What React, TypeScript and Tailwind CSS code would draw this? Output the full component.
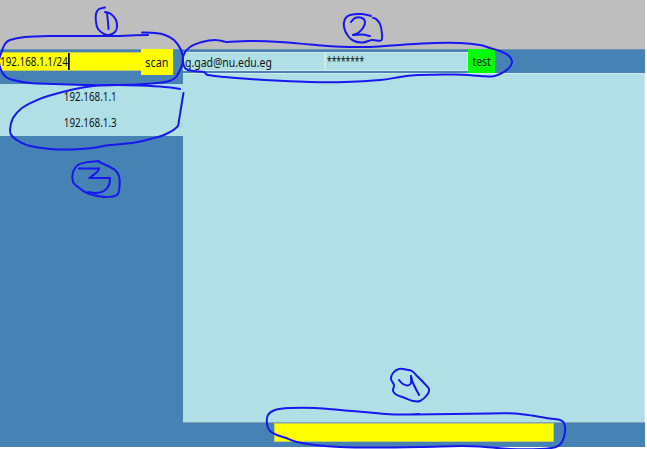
type Point = [number, number];

// Turns a list of pen positions into one smooth curve.
function smooth(points: Point[]): string {
  let d = `M${points[0][0]} ${points[0][1]}`;
  for (let i = 0; i < points.length - 1; i++) {
    const a = points[Math.max(i - 1, 0)];
    const b = points[i];
    const c = points[i + 1];
    const e = points[Math.min(i + 2, points.length - 1)];
    d += `C${b[0] + (c[0] - a[0]) / 6} ${b[1] + (c[1] - a[1]) / 6} ${c[0] - (e[0] - b[0]) / 6} ${c[1] - (e[1] - b[1]) / 6} ${c[0]} ${c[1]}`;
  }
  return d;
}

const strokes: Point[][] = [
  // 1
  [[105, 7.5], [99, 9], [96, 14], [96, 22], [98, 29], [104, 34], [109, 35], [115, 32], [117, 27], [116, 20], [111, 14], [105, 12]],
  [[107, 13], [108, 22], [108.5, 29]],
  [[148, 35], [130, 35.5], [108, 36], [80, 36], [50, 36], [25, 37], [10, 40], [5, 44], [2, 51], [-1, 60], [1, 70], [6, 77], [13, 80], [30, 83], [55, 84], [88, 85], [120, 85], [145, 84], [165, 82], [175, 78], [180, 70], [183, 60], [181, 50], [174, 40], [165, 35], [155, 33], [142, 32.5]],
  // 2
  [[371, 16], [362, 14], [350, 15], [345, 19], [344, 27], [348, 36], [354, 41], [363, 42.5], [372, 40], [381, 40.5], [382, 34], [380, 24], [376, 19], [373, 18]],
  [[351, 22], [355, 18], [362, 18], [365, 22], [363, 28], [358, 33], [353, 35], [362, 34.5], [370, 36]],
  [[226, 42], [215, 40], [202, 42], [190, 47], [184, 54], [183, 62], [186, 69], [194, 71], [204, 72], [208, 75], [225, 77], [250, 79], [275, 80.5], [310, 82], [345, 82], [380, 80], [400, 77], [418, 75], [455, 74.5], [480, 76], [492, 76.5], [500, 74], [508, 69], [512, 62], [509, 56], [500, 51], [490, 48], [480, 45], [460, 43], [435, 43], [405, 44.5], [370, 47], [335, 46.5], [310, 44.5], [280, 42], [250, 41], [226, 42]],
  // 3
  [[180, 89], [165, 87], [140, 85.5], [115, 85], [93, 86], [75, 89], [48, 96], [35, 101], [22, 108], [13, 118], [10, 130], [12, 136], [20, 142], [30, 146], [50, 149], [72, 149.5], [92, 148], [110, 145], [132, 143], [150, 139], [164, 135], [177, 127], [179, 120], [181, 108], [183.5, 93]],
  [[99, 161], [88, 162], [78, 165], [73, 172], [73, 182], [78, 187], [85, 192], [93, 195], [106, 197], [117, 195], [119.5, 187], [119, 176], [115, 170], [108, 166], [99, 162]],
  [[79, 168.5], [99, 168.5]],
  [[99, 168.5], [97, 172], [89.5, 178]],
  [[89.5, 178], [110, 178]],
  [[110, 178], [109, 185], [104, 191], [96, 193], [88, 192]],
  // 4
  [[406, 369.5], [399, 369], [393, 373], [391, 379], [394, 385], [393, 391], [397, 395], [405, 398], [413, 401], [420, 401], [427, 395], [429, 389], [424, 383], [418, 377], [412, 371], [406, 369.5]],
  [[399, 380], [403, 384], [408, 385.5], [411, 383], [411, 376]],
  [[411, 376], [413, 383], [419, 395]],
  [[419, 414], [395, 414.5], [375, 413], [345, 410.5], [315, 408], [290, 408], [275, 410], [268, 415], [267, 424], [270, 431], [277, 435], [286, 438], [297, 442], [315, 445], [340, 447], [375, 447.5], [420, 447], [460, 446], [480, 446.5], [510, 449], [540, 449], [556, 447], [562, 442], [565, 432], [564, 423], [560, 420], [550, 418.5], [535, 416], [515, 413.5], [490, 413.5], [414, 414.5]],
];

function Ink() {
  return (
    <svg className="pointer-events-none absolute left-0 top-0" width="647" height="449" viewBox="0 0 647 449" fill="none" stroke="#1717ee" strokeWidth="2" strokeLinecap="round" strokeLinejoin="round">
      {strokes.map((points, i) => <path key={i} d={smooth(points)} />)}
    </svg>
  );
}

export default function App() {
  return (
    <div className="relative h-[449px] w-[647px] overflow-hidden bg-white font-['Noto_Sans','Open_Sans',sans-serif] text-[12px] leading-[18px] text-[#101618]">
      <div className="flex h-[447px] w-[645px] flex-col bg-[#4682b4]">
        <header className="h-[49px] shrink-0 bg-[#bebebe]" />
        <div className="flex h-[398px] border-t border-[#6b93b3]">
          <aside className="w-[183px] shrink-0">
            <div className="flex h-[34px] items-start">
              <div className="mt-[2px] h-[19px] w-[141px] border-y border-[#c8cc54] bg-[#ffff00]">
                <span className="inline-block origin-left scale-x-[.82] border-r-2 border-black leading-[17px]">192.168.1.1/24</span>
              </div>
              <button className="-mt-px h-[26px] w-8 bg-[#ffff00] text-center leading-[27px]"><span className="inline-block scale-x-[.9]">scan</span></button>
            </div>
            <ul className="h-[52px] bg-[#b0e0e6] text-center">
              <li className="h-[26px] leading-[26px]"><span className="inline-block -translate-x-px scale-x-[.82]">192.168.1.1</span></li>
              <li className="h-[26px] leading-[26px]"><span className="inline-block -translate-x-px scale-x-[.82]">192.168.1.3</span></li>
            </ul>
          </aside>
          <main className="flex w-[462px] flex-col">
            <div className="flex h-[23px] items-start">
              <div className="mt-[2px] h-[19px] w-[142px] border border-[#d4e8eb] bg-[#b0e0e6] pl-px"><span className="inline-block origin-left scale-x-[.87] whitespace-nowrap leading-[19px]">g.gad@nu.edu.eg</span></div>
              <div className="mt-[2px] h-[19px] w-[143px] border border-[#d4e8eb] bg-[#b0e0e6] pl-px"><span className="inline-block origin-left scale-x-[.7] leading-[15px]">********</span></div>
              <button className="-mt-px h-6 w-[27px] bg-[#00ff00] text-center leading-[26px]"><span className="inline-block scale-x-[.87]">test</span></button>
            </div>
            <div className="h-[349px] border-r border-t border-[#d4e8eb] bg-[#b0e0e6]" />
            <div className="h-[25px] border-t border-[#7ea5b9] pl-[91px]">
              <div className="h-[19px] w-[280px] border border-[#c8cc54] bg-[#ffff00]" />
            </div>
          </main>
        </div>
      </div>
      <Ink />
    </div>
  );
}
